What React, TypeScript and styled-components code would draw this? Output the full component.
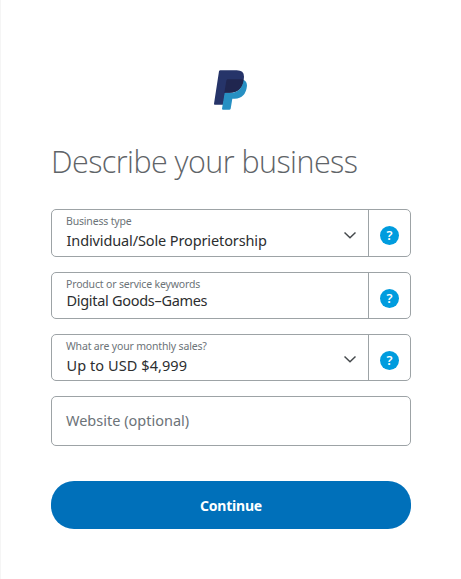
import React from "react";
import styled, { createGlobalStyle } from "styled-components";

const GlobalStyle = createGlobalStyle`
  * { box-sizing: border-box; }
  body {
    margin: 0;
    background: #fff;
    font-family: "Noto Sans", "Open Sans", sans-serif;
    color: #2c2e2f;
  }
`;

const Page = styled.main`
  min-height: 579px;
  padding: 60px 50px 0;
  border-left: 1px solid #f5f5f5;
`;

const Logo = styled.svg`
  display: block;
  width: 60px;
  height: 60px;
  margin-left: 149px;
`;

const Title = styled.h1`
  margin: 19px 0 0;
  height: 70px;
  font-family: "Open Sans", "Noto Sans", sans-serif;
  font-size: 30.5px;
  line-height: 44px;
  font-weight: 300;
  letter-spacing: -0.56px;
  color: #5f6468;
  white-space: nowrap;
`;

const Form = styled.form`
  display: flex;
  flex-direction: column;
`;

const Field = styled.div<{ $height: number; $gap: number }>`
  display: flex;
  height: ${(p) => p.$height}px;
  margin-bottom: ${(p) => p.$gap}px;
  border: 1px solid #9da3a6;
  border-radius: 5px;
`;

const FieldBody = styled.div`
  flex: 1;
  display: flex;
  align-items: center;
  padding: 0 12px 0 14px;
`;

const FieldText = styled.div`
  flex: 1;
  align-self: flex-start;
  padding-top: 4px;
`;

const Label = styled.div`
  font-size: 10.5px;
  line-height: 15px;
  letter-spacing: -0.17px;
  color: #6c7378;
  white-space: nowrap;
`;

const Value = styled.div<{ $spacing: number; $tight?: boolean }>`
  margin-top: ${(p) => (p.$tight ? -2 : 1)}px;
  padding-left: 0.5px;
  font-size: 14.5px;
  line-height: 20px;
  letter-spacing: ${(p) => p.$spacing}px;
  white-space: nowrap;
`;

const Placeholder = styled.span`
  padding-bottom: 2px;
  font-size: 14.5px;
  line-height: 20px;
  color: #6c7378;
`;

const Chevron = styled.svg`
  width: 12px;
  height: 8px;
  margin-top: 3px;
  fill: none;
  stroke: #45494c;
  stroke-width: 1.5;
`;

const HelpCell = styled.div`
  width: 42px;
  display: flex;
  align-items: center;
  justify-content: center;
  padding-top: 5px;
  border-left: 1px solid #9da3a6;
`;

const HelpIcon = styled.span`
  width: 19px;
  height: 19px;
  border-radius: 50%;
  background: #009cde;
  color: #fff;
  font-size: 13px;
  font-weight: 600;
  line-height: 19px;
  text-align: center;
`;

const Continue = styled.button`
  height: 48px;
  padding: 0;
  border: 0;
  border-radius: 23px;
  background: #0070ba;
  color: #fff;
  font-family: inherit;
  font-size: 14px;
  font-weight: 700;
  letter-spacing: -0.2px;
`;

const fields = [
  { label: "Business type", value: "Individual/Sole Proprietorship", select: true, height: 48, spacing: -0.12 },
  { label: "Product or service keywords", value: "Digital Goods–Games", select: false, height: 47, spacing: -0.3 },
  { label: "What are your monthly sales?", value: "Up to USD $4,999", select: true, height: 47, spacing: 0.08 },
];

export default function App() {
  return (
    <>
      <GlobalStyle />
      <Page>
        <Logo viewBox="0 0 180 180" aria-label="PayPal">
          <path fill="#263469" d="M61 31H110Q132 31 132 50Q130 97 89 98H76L70 134H44Q42 134 42 131L57 34Q58 31 61 31Z" />
          <path fill="#2790c3" d="M130 59Q141 64 141 77Q137 115 104 116H97L92 146Q91 149 88 149H69Q66 149 66 146L74 99H89Q126 97 130 59Z" />
          <path fill="#20264f" d="M84 58H123Q128 58 131 60Q125 98 88 98H73L79 62Q80 58 84 58Z" />
        </Logo>
        <Title>Describe your business</Title>
        <Form onSubmit={(e) => e.preventDefault()}>
          {fields.map((f) => (
            <Field key={f.label} $height={f.height} $gap={15}>
              <FieldBody>
                <FieldText>
                  <Label>{f.label}</Label>
                  <Value $spacing={f.spacing} $tight={!f.select}>{f.value}</Value>
                </FieldText>
                {f.select && (
                  <Chevron viewBox="0 0 12 8">
                    <path d="M.5 1.500 6 6.700l5.500-5.200" />
                  </Chevron>
                )}
              </FieldBody>
              <HelpCell>
                <HelpIcon>?</HelpIcon>
              </HelpCell>
            </Field>
          ))}
          <Field $height={50} $gap={35}>
            <FieldBody>
              <Placeholder>Website (optional)</Placeholder>
            </FieldBody>
          </Field>
          <Continue>Continue</Continue>
        </Form>
      </Page>
    </>
  );
}
